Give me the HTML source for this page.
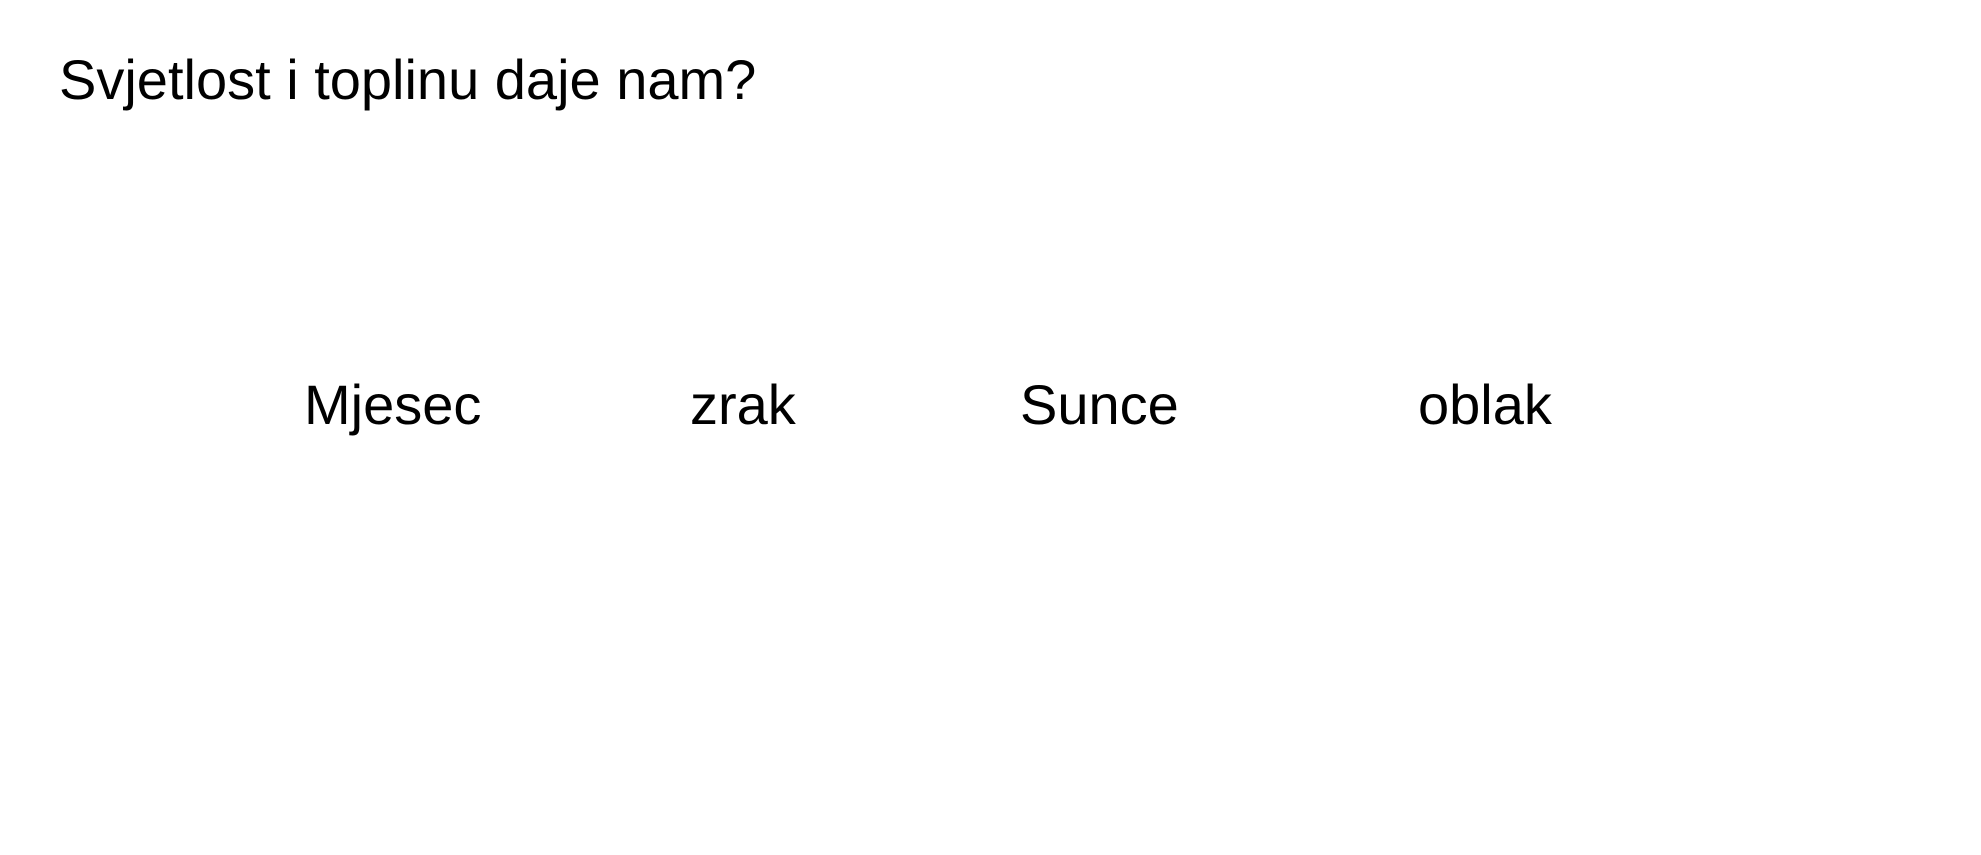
<!DOCTYPE html>
<html><head><meta charset="utf-8"><style>
html,body{margin:0;padding:0;background:#fff;width:1981px;height:855px;overflow:hidden}
div{position:absolute;font-family:"Liberation Sans",Arial,sans-serif;color:#000;line-height:1;white-space:nowrap}
.t{font-size:56px;left:59px;top:52px}
.w{font-size:56px;top:377px}
</style></head><body>
<div class="t">Svjetlost i toplinu daje nam?</div>
<div class="w" style="left:304px">Mjesec</div>
<div class="w" style="left:690px">zrak</div>
<div class="w" style="left:1020px">Sunce</div>
<div class="w" style="left:1418px">oblak</div>
</body></html>
